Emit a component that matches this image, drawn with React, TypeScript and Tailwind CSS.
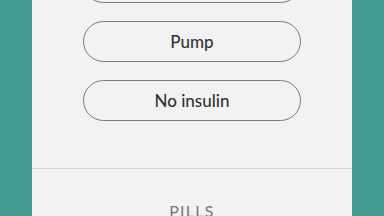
const options = ['Injections', 'Pump', 'No insulin']

export default function App() {
  return (
    <div className="flex h-[216px] w-[384px] justify-center overflow-hidden bg-[#459a90] font-['Lato',sans-serif]">
      <div className="flex w-[320px] flex-col bg-[#f2f2f2]">
        <div className="mt-[-38px] flex flex-col items-center gap-[18px]">
          {options.map((label) => (
            <button
              key={label}
              className="flex h-[41px] w-[218px] items-center justify-center rounded-full border border-[#7a7a7a] text-[17px] font-medium text-[#333]"
            >
              {label}
            </button>
          ))}
        </div>
        <div className="mt-[47px] border-t border-[#d4d4d4]" />
        <div className="pt-[30px] text-center text-[16px] tracking-[0.08em] text-[#777]">PILLS</div>
      </div>
    </div>
  )
}
